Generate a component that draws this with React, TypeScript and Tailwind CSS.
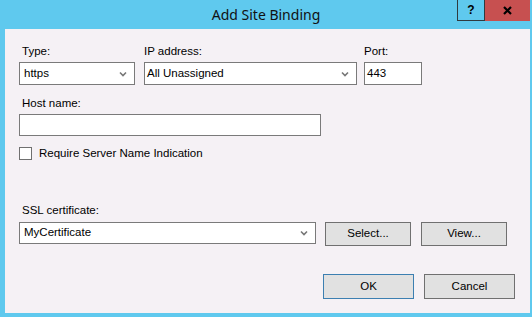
import React from 'react';

const font = { fontFamily: '"Liberation Sans", Arial, sans-serif' };

function Chevron() {
  return (
    <svg width="8" height="6" viewBox="0 0 8 6" className="shrink-0">
      <polyline points="1,1.5 4,4.5 7,1.5" fill="none" stroke="#777777" strokeWidth="1.6" />
    </svg>
  );
}

function Combo({ value, className }: { value: string; className: string }) {
  return (
    <div className={`flex items-center justify-between border border-[#7a7a7a] bg-white pr-[7px] ${className}`}>
      <span className="leading-none text-[#000]">{value}</span>
      <Chevron />
    </div>
  );
}

function Button({ label, primary, className }: { label: string; primary?: boolean; className: string }) {
  return (
    <button
      className={`flex items-center justify-center border bg-[#e1e1e1] text-black ${
        primary ? 'border-[#3c7fb1]' : 'border-[#707070]'
      } ${className}`}
    >
      {label}
    </button>
  );
}

export default function App() {
  return (
    <div className="flex h-[317px] w-[532px] flex-col bg-[#5fc9ee] text-[11.5px] text-black" style={font}>
      {/* title bar */}
      <div className="relative flex h-[29px] shrink-0 items-center justify-center">
        <span className="text-[14px] text-[#111]" style={{ fontFamily: '"Noto Sans", "Open Sans", sans-serif' }}>
          Add Site Binding
        </span>
        <div className="absolute right-[2px] top-0 flex h-[21px]">
          <div className="flex w-[28px] items-center justify-center border-x border-b border-[#2f3b40] text-[12px] font-bold leading-none">
            ?
          </div>
          <div className="flex w-[45px] items-center justify-center bg-[#c75050]">
            <svg width="9" height="9" viewBox="0 0 9 9">
              <path d="M1 1 L8 8 M8 1 L1 8" stroke="#000" strokeWidth="2.2" />
            </svg>
          </div>
        </div>
      </div>

      {/* client area */}
      <div className="ml-[5px] mr-[2px] mb-[4px] flex flex-1 flex-col bg-[#f5f1f5] pl-[14px] pr-[15px] pt-[16px]">
        {/* type / ip / port */}
        <div className="flex items-start">
          <div className="flex w-[116px] flex-col">
            <span className="pl-[3px] leading-[13px]">Type:</span>
            <Combo value="https" className="mt-[4px] h-[23px] pl-[4px]" />
          </div>
          <div className="ml-[9px] flex w-[213px] flex-col">
            <span className="leading-[13px]">IP address:</span>
            <Combo value="All Unassigned" className="mt-[4px] h-[23px] pl-[2px]" />
          </div>
          <div className="ml-[7px] flex w-[58px] flex-col">
            <span className="leading-[13px]">Port:</span>
            <div className="mt-[4px] flex h-[23px] items-center border border-[#7a7a7a] bg-white pl-[2px] leading-none">443</div>
          </div>
        </div>

        {/* host name */}
        <span className="mt-[12px] pl-[3px] leading-[13px]">Host name:</span>
        <div className="mt-[4px] h-[22px] w-[302px] border border-[#7a7a7a] bg-white" />

        <div className="mt-[11px] flex items-center">
          <div className="h-[13px] w-[13px] border border-[#707070] bg-white" />
          <span className="ml-[7px] leading-[13px]">Require Server Name Indication</span>
        </div>

        {/* ssl */}
        <span className="mt-[44px] pl-[3px] leading-[13px]">SSL certificate:</span>
        <div className="mt-[5px] flex items-start">
          <Combo value="MyCertificate" className="h-[22px] w-[297px] pl-[4px]" />
          <Button label="Select..." className="ml-[9px] h-[24px] w-[86px]" />
          <Button label="View..." className="ml-[10px] h-[24px] w-[86px]" />
        </div>

        <div className="mt-[28px] flex justify-end gap-[10px]">
          <Button label="OK" primary className="h-[25px] w-[91px]" />
          <Button label="Cancel" className="h-[25px] w-[91px]" />
        </div>
      </div>
    </div>
  );
}
